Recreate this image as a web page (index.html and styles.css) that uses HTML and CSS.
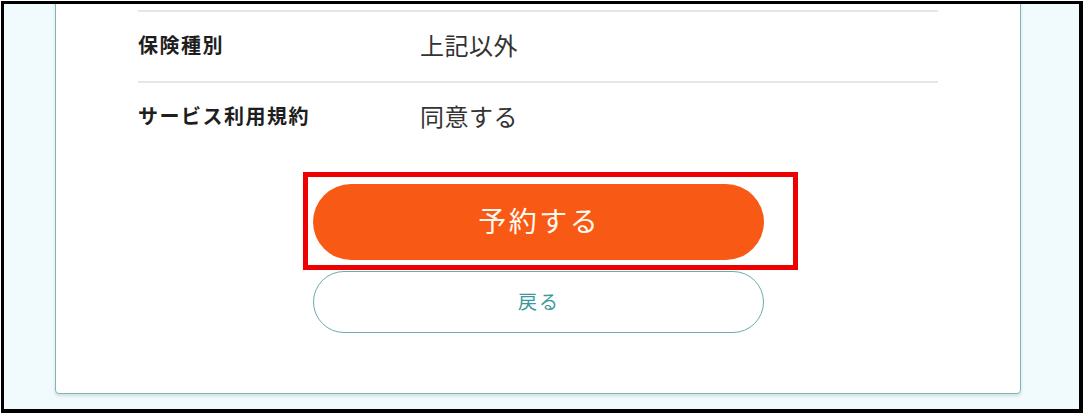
FILE: index.html
```html
<!DOCTYPE html>
<html lang="ja">
<head>
<meta charset="utf-8">
<title>予約確認</title>
<link rel="stylesheet" href="styles.css">
</head>
<body>
<div class="frame">
  <div class="card">
    <div class="rows">
      <div class="row">
        <div class="label">保険種別</div>
        <div class="value">上記以外</div>
      </div>
      <div class="row">
        <div class="label">サービス利用規約</div>
        <div class="value">同意する</div>
      </div>
    </div>
    <div class="actions">
      <div class="primary-wrap">
        <button class="btn btn-primary" type="button">予約する</button>
        <div class="highlight"></div>
      </div>
      <button class="btn btn-back" type="button">戻る</button>
    </div>
  </div>
</div>
</body>
</html>
```

FILE: styles.css
```css
html, body {
  margin: 0;
  padding: 0;
  background: #ffffff;
}

body {
  font-family: "Noto Sans CJK JP", "Noto Sans", sans-serif;
}

.frame {
  margin: 1px 0 0 1px;
  width: 1082px;
  height: 412px;
  box-sizing: border-box;
  border-style: solid;
  border-color: #000;
  border-width: 3px 4px 4px 3px;
  background: #f1fafc;
  overflow: hidden;
  padding-left: 51px;
}

.card {
  width: 966px;
  box-sizing: border-box;
  margin-top: -17px;
  padding: 22px 82px 60px;
  background: #ffffff;
  border: 1px solid #7db8b9;
  border-radius: 4px;
  box-shadow: 0 2px 3px rgba(60, 110, 110, 0.18);
}

.rows {
  display: flex;
  flex-direction: column;
}

.row {
  display: flex;
  align-items: center;
  height: 71px;
  box-sizing: border-box;
  border-top: 2px solid #e6e6e6;
  padding-bottom: 5px;
}

.label {
  width: 282px;
  font-size: 20px;
  font-weight: 700;
  letter-spacing: 1.5px;
  color: #1e1e1e;
}

.value {
  font-size: 24px;
  font-weight: 400;
  letter-spacing: 0.5px;
  color: #333333;
}

.actions {
  display: flex;
  flex-direction: column;
  align-items: center;
  gap: 11px;
  margin-top: 32px;
}

.primary-wrap {
  position: relative;
  display: flex;
}

.btn {
  width: 451px;
  box-sizing: border-box;
  margin: 0;
  font-family: "Noto Sans CJK JP", "Noto Sans", sans-serif;
  cursor: pointer;
  display: flex;
  align-items: center;
  justify-content: center;
}

.btn-primary {
  height: 76px;
  border: none;
  border-radius: 38px;
  background: #f85a15;
  color: #fff9f0;
  font-size: 28px;
  font-weight: 400;
  letter-spacing: 2.5px;
  padding: 0 0 4px 2.5px;
}

.btn-back {
  height: 62px;
  border: 1px solid #6faaad;
  border-radius: 31px;
  background: #ffffff;
  color: #3b999c;
  font-size: 19px;
  letter-spacing: 2px;
  padding: 0 0 4px 2px;
}

.highlight {
  position: absolute;
  left: -10px;
  top: -12px;
  width: 495px;
  height: 98px;
  box-sizing: border-box;
  border: 5px solid #ee0000;
  pointer-events: none;
}
```
